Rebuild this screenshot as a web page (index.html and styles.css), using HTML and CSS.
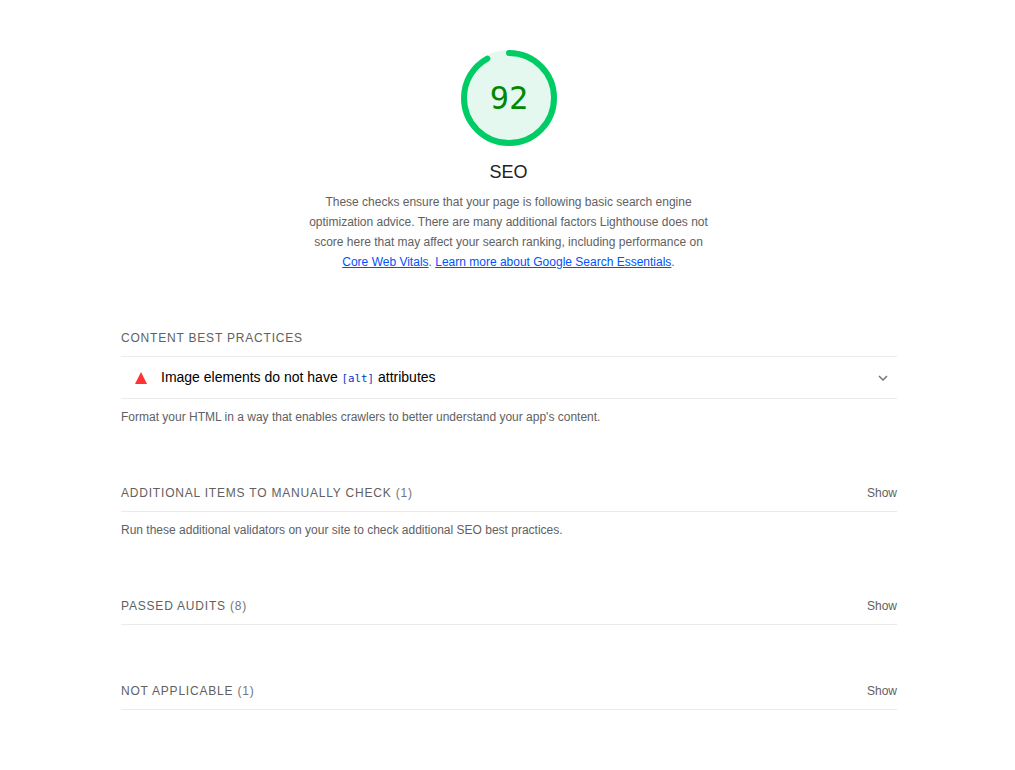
FILE: index.html
```html
<!DOCTYPE html>
<html lang="en">
<head>
<meta charset="utf-8">
<title>SEO</title>
<link rel="stylesheet" href="styles.css">
</head>
<body>
<main class="report">
  <header class="score-header">
    <div class="gauge">
      <svg class="gauge-svg" viewBox="0 0 96 96" width="96" height="96" aria-hidden="true">
        <circle class="gauge-base" cx="48" cy="48" r="45"></circle>
        <circle class="gauge-arc" cx="48" cy="48" r="45" pathLength="100" stroke-dasharray="92 100" transform="rotate(-90 48 48)"></circle>
      </svg>
      <span class="gauge-value">92</span>
    </div>
    <h1 class="category-title">SEO</h1>
    <p class="category-desc">These checks ensure that your page is following basic search engine optimization advice. There are many additional factors Lighthouse does not score here that may affect your search ranking, including performance on <a href="#">Core Web Vitals</a>. <a href="#">Learn more about Google Search Essentials</a>.</p>
  </header>

  <section class="group group-content">
    <h2 class="group-title">Content Best Practices</h2>
    <div class="audit">
      <svg class="fail-icon" viewBox="0 0 12 12" width="12" height="12" aria-hidden="true"><path d="M6 0 L12 12 L0 12 Z"></path></svg>
      <span class="audit-title">Image elements do not have <code>[alt]</code> attributes</span>
      <svg class="chevron" viewBox="0 0 10 6" width="10" height="6" aria-hidden="true"><path d="M1 1 L5 5 L9 1"></path></svg>
    </div>
    <p class="group-desc">Format your HTML in a way that enables crawlers to better understand your app's content.</p>
  </section>

  <section class="group group-manual">
    <div class="clump">
      <h2 class="group-title">Additional items to manually check <span class="count">(1)</span></h2>
      <span class="show">Show</span>
    </div>
    <p class="group-desc">Run these additional validators on your site to check additional SEO best practices.</p>
  </section>

  <section class="group group-passed">
    <div class="clump">
      <h2 class="group-title">Passed audits <span class="count">(8)</span></h2>
      <span class="show">Show</span>
    </div>
  </section>

  <section class="group group-na">
    <div class="clump">
      <h2 class="group-title">Not applicable <span class="count">(1)</span></h2>
      <span class="show">Show</span>
    </div>
  </section>
</main>
</body>
</html>
```
FILE: styles.css
```css
* { box-sizing: border-box; }
html, body { margin: 0; padding: 0; background: #fff; }
body {
  font-family: "Liberation Sans", Arial, sans-serif;
  font-size: 12px;
  color: #212121;
}
.report {
  width: 776px;
  margin-left: 121px;
  padding-top: 50px;
}
.score-header {
  display: flex;
  flex-direction: column;
  align-items: center;
}
.gauge {
  position: relative;
  width: 96px;
  height: 96px;
}
.gauge-svg { display: block; }
.gauge-base { fill: #e5f8ef; stroke: #e5f8ef; stroke-width: 6; }
.gauge-arc {
  fill: none;
  stroke: #00cc66;
  stroke-width: 6;
  stroke-linecap: round;
}
.gauge-value {
  position: absolute;
  inset: 0;
  display: flex;
  align-items: center;
  justify-content: center;
  font-family: "DejaVu Sans Mono", monospace;
  font-size: 32px;
  color: #008800;
}
.category-title {
  margin: 15px 1px 0 0;
  font-size: 18px;
  font-weight: 400;
  line-height: 22px;
  color: #212121;
}
.category-desc {
  width: 404px;
  margin: 9px 1px 0 0;
  font-size: 12px;
  line-height: 20px;
  text-align: center;
  color: #616161;
}
.category-desc a { color: #0051ff; }
.group-title {
  margin: 0;
  font-size: 12px;
  font-weight: 400;
  line-height: 18px;
  letter-spacing: 0.8px;
  text-transform: uppercase;
  color: #616161;
}
.count { color: #757575; }
.group-content { margin-top: 57px; }
.group-content .group-title {
  padding-bottom: 9px;
  border-bottom: 1px solid #ebebeb;
}
.audit {
  display: flex;
  align-items: center;
  height: 42px;
  padding-left: 14px;
  padding-bottom: 2px;
  border-bottom: 1px solid #ebebeb;
}
.fail-icon { fill: #ff3333; flex: none; margin-top: 2px; }
.audit-title {
  flex: 1;
  margin-left: 14px;
  font-size: 14px;
  color: #000;
}
.audit-title code {
  font-family: "DejaVu Sans Mono", monospace;
  font-size: 10.8px;
  color: #0938c2;
}
.chevron {
  flex: none;
  margin-right: 9px;
  fill: none;
  stroke: #757575;
  stroke-width: 1.5;
  margin-top: 2px;
}
.group-desc {
  margin: 0;
  padding-top: 11px;
  font-size: 12px;
  line-height: 14px;
  color: #616161;
}
.clump {
  display: flex;
  align-items: center;
  justify-content: space-between;
  padding-bottom: 9px;
  border-bottom: 1px solid #ebebeb;
}
.show { font-size: 12px; color: #616161; }
.group-manual { margin-top: 60px; }
.group-passed { margin-top: 60px; }
.group-na { margin-top: 57px; }
```
